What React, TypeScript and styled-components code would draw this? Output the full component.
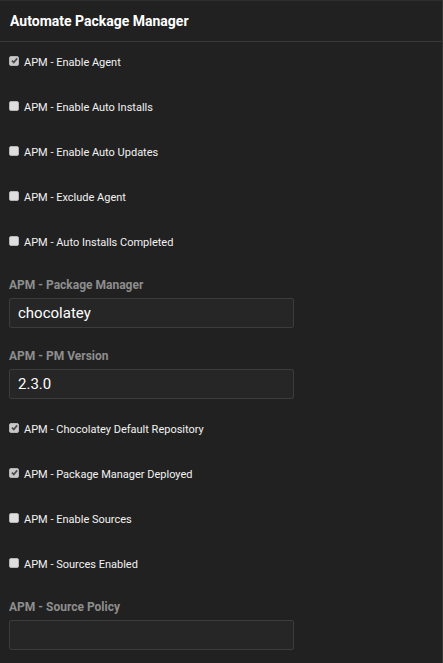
import React from "react";
import styled, { createGlobalStyle } from "styled-components";

const Global = createGlobalStyle`
  html, body { margin: 0; padding: 0; background: #212121; }
  body { font-family: Roboto, "Liberation Sans", Arial, sans-serif; }
`;

const Panel = styled.div`
  width: 443px;
  height: 663px;
  box-sizing: border-box;
  background: #212121;
  border-top: 1px solid #2e2e2e;
  border-right: 1px solid #363636;
  overflow: hidden;
`;

const Header = styled.div`
  height: 40px;
  display: flex;
  align-items: center;
  padding-left: 10px;
  border-bottom: 1px solid #3a3a3a;
`;

const Title = styled.h1`
  margin: 0;
  font-size: 14px;
  font-weight: 700;
  color: #ffffff;
`;

const Form = styled.div`
  display: flex;
  flex-direction: column;
  padding: 10px 9px 0 9px;
`;

const CheckRow = styled.label`
  height: 20px;
  margin-bottom: 25px;
  display: flex;
  align-items: center;
  gap: 5px;
  font-size: 11px;
  color: #f2f2f2;
`;

const Box = styled.span<{ $checked?: boolean }>`
  width: 8px;
  height: 8px;
  border-radius: 2px;
  background: ${(p) => (p.$checked ? "#c9c9c9" : "#dedede")};
  border: 1px solid #b5b5b5;
  display: flex;
  align-items: center;
  justify-content: center;
  margin-top: -3px;
`;

const Field = styled.div`
  display: flex;
  flex-direction: column;
  gap: 5px;
  margin-bottom: 20px;
`;

const FieldLabel = styled.div`
  height: 16px;
  line-height: 17px;
  font-size: 12px;
  font-weight: 700;
  color: #8e8e8e;
`;

const Input = styled.div`
  width: 285px;
  height: 30px;
  box-sizing: border-box;
  border: 1px solid #3c3c3c;
  border-radius: 2px;
  background: #262626;
  padding-left: 8px;
  display: flex;
  align-items: center;
  font-size: 15px;
  color: #ffffff;
`;

function Check({ checked, label }: { checked?: boolean; label: string }) {
  return (
    <CheckRow>
      <Box $checked={checked}>
        {checked && (
          <svg width="7" height="7" viewBox="0 0 8 8">
            <path d="M1 4.2 L3.2 6.2 L7 1.6" fill="none" stroke="#4a4a4a" strokeWidth="1.9" />
          </svg>
        )}
      </Box>
      {label}
    </CheckRow>
  );
}

function TextField({ label, value }: { label: string; value: string }) {
  return (
    <Field>
      <FieldLabel>{label}</FieldLabel>
      <Input>{value}</Input>
    </Field>
  );
}

export default function App() {
  return (
    <>
      <Global />
      <Panel>
        <Header>
          <Title>Automate Package Manager</Title>
        </Header>
        <Form>
          <Check checked label="APM - Enable Agent" />
          <Check label="APM - Enable Auto Installs" />
          <Check label="APM - Enable Auto Updates" />
          <Check label="APM - Exclude Agent" />
          <Check label="APM - Auto Installs Completed" />
          <TextField label="APM - Package Manager" value="chocolatey" />
          <TextField label="APM - PM Version" value="2.3.0" />
          <Check checked label="APM - Chocolatey Default Repository" />
          <Check checked label="APM - Package Manager Deployed" />
          <Check label="APM - Enable Sources" />
          <Check label="APM - Sources Enabled" />
          <TextField label="APM - Source Policy" value="" />
        </Form>
      </Panel>
    </>
  );
}
